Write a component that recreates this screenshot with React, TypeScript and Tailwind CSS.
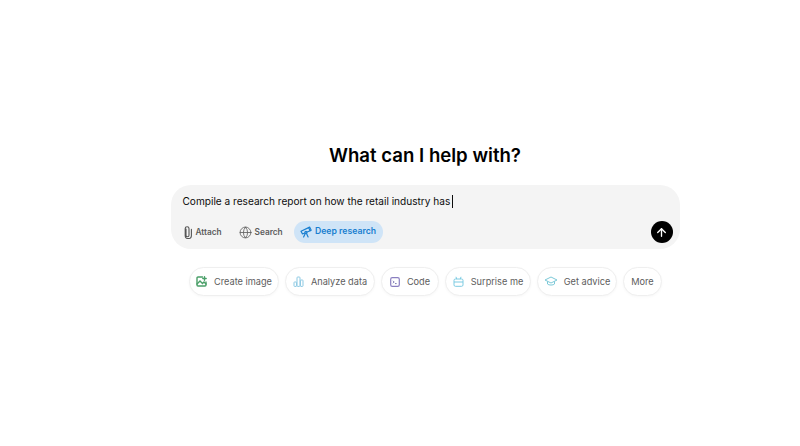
import React from "react";
import { ArrowUp, Globe } from "lucide-react";

function Chip({ icon, label, w, gap }: { icon?: React.ReactNode; label: string; w: string; gap: string }) {
  return (
    <div className={`h-[29px] ${w} ${gap} flex items-center justify-center rounded-full border border-[#efefef] bg-white shadow-[0_1px_3px_rgba(0,0,0,0.03)] text-[#5d5d5d] text-[9.2px]`}>
      {icon}
      <span>{label}</span>
    </div>
  );
}

export default function App() {
  return (
    <div className="w-[800px] h-[446px] bg-white flex flex-col items-center overflow-hidden [font-family:Inter,sans-serif]">
      <h1 className="mt-[143px] h-[25px] leading-[25px] text-[18.6px] font-semibold text-black ml-[50px]">What can I help with?</h1>
      <div className="mt-[17px] ml-[50px] w-[509px] h-[64px] rounded-[20px] bg-[#f4f4f4] pl-[12px] pr-[7px] flex flex-col">
        <div className="mt-[9px] h-[14px] leading-[14px] text-[10.1px] text-[#0d0d0d] flex items-center">
          <span>Compile a research report on how the retail industry has</span>
          <span className="ml-[2px] w-px h-[13px] bg-[#0d0d0d]" />
        </div>
        <div className="mt-[13px] flex items-center justify-between">
          <div className="flex items-center text-[8.3px] font-semibold text-[#5d5d5d]">
            <div className="flex items-center gap-[4px] w-[56px]">
              <svg width="9" height="13" viewBox="0 0 9 13" fill="none" stroke="#555" strokeWidth="1.1" strokeLinecap="round">
                <path d="M3 3v6.2a1.5 1.5 0 0 0 3 0V2.6a1.9 1.9 0 0 0-3.8 0v6.8a3.1 3.1 0 0 0 6.2 0V3.4" />
              </svg>
              <span>Attach</span>
            </div>
            <div className="flex items-center gap-[3px] w-[55px]">
              <Globe size={13} strokeWidth={1.5} />
              <span>Search</span>
            </div>
            <div className="flex items-center gap-[3px] h-[22px] w-[89px] justify-center rounded-full bg-[#cfe4f7] text-[#1a7fd0] font-semibold text-[8.7px]">
              <svg width="12" height="12" viewBox="0 0 12 12" fill="none" stroke="#1a7fd0" strokeWidth="1.2" strokeLinejoin="round" strokeLinecap="round">
                <path d="M1 5.2 8.6 1.6l1.5 3.2-7.6 3.2z" />
                <path d="m8.6 1.6 1-.5 1.6 3.2-1.1.5" />
                <path d="M5.5 7 3.6 11M6.2 6.8l1.9 4.2" />
                <circle cx="5.9" cy="6.4" r="1" fill="#cfe4f7" />
              </svg>
              <span>Deep research</span>
            </div>
          </div>
          <div className="w-[22px] h-[22px] rounded-full bg-black flex items-center justify-center text-white">
            <ArrowUp size={13} strokeWidth={2.5} />
          </div>
        </div>
      </div>
      <div className="mt-[18px] ml-[51px] flex items-center gap-[6px]">
        <Chip w="w-[90px]" gap="gap-[7px]" label="Create image" icon={
          <svg width="11" height="11" viewBox="0 0 11 11" fill="none" stroke="#4a9f68" strokeWidth="1.4" strokeLinecap="round">
            <path d="M6.5 1H2a1 1 0 0 0-1 1v7a1 1 0 0 0 1 1h7a1 1 0 0 0 1-1V6" />
            <path d="M1 8l3-3 2.5 2.5L8 6l2 2" />
            <path d="M8.5 .8v3.4M6.8 2.5h3.4" />
          </svg>
        } />
        <Chip w="w-[90px]" gap="gap-[7px]" label="Analyze data" icon={
          <svg width="11" height="11" viewBox="0 0 11 11" fill="none" stroke="#8cc9e3" strokeWidth="1">
            <rect x="1" y="6" width="2.6" height="4.4" rx=".6" />
            <rect x="4" y="1" width="3" height="9.4" rx=".8" />
            <rect x="7.4" y="4" width="2.6" height="6.4" rx=".6" />
          </svg>
        } />
        <Chip w="w-[58px]" gap="gap-[7px]" label="Code" icon={
          <svg width="10" height="10" viewBox="0 0 10 10" fill="none"><rect x="0.7" y="0.7" width="8.6" height="8.6" rx="1.6" stroke="#8a7fc0" strokeWidth="1.2" /><path d="M3 3.8 4.2 5 3 6.2M5 6.6h1.6" stroke="#55509a" strokeWidth="0.8" /></svg>
        } />
        <Chip w="w-[86px]" gap="gap-[7px]" label="Surprise me" icon={
          <svg width="11" height="11" viewBox="0 0 11 11" fill="none" stroke="#7ccbe2" strokeWidth="1">
            <rect x="1" y="3" width="9" height="7.3" rx="1.4" />
            <path d="M1 6h9M3.6 3 3 .8M7.4 3 8 .8" />
          </svg>
        } />
        <Chip w="w-[80px]" gap="gap-[6px]" label="Get advice" icon={
          <svg width="14" height="11" viewBox="0 0 14 11" fill="none" stroke="#7cc9d8" strokeWidth="1" strokeLinejoin="round">
            <path d="M7 1 13 4 7 7 1 4z" />
            <path d="M3.5 5.4V8c1 1.4 6 1.4 7 0V5.4" />
          </svg>
        } />
        <Chip w="w-[39px]" gap="gap-0" label="More" />
      </div>
    </div>
  );
}
